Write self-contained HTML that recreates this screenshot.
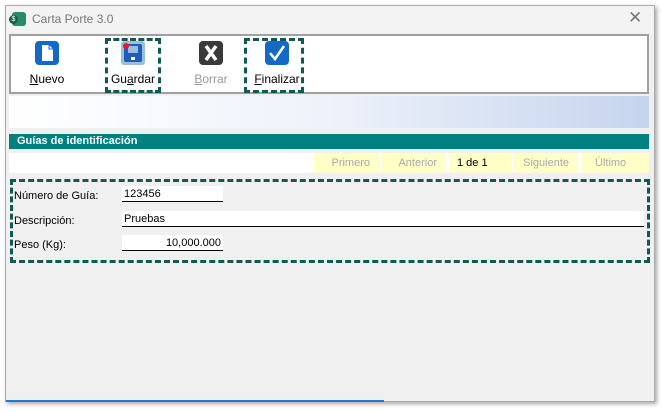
<!DOCTYPE html>
<html><head><meta charset="utf-8"><style>
*{margin:0;padding:0;box-sizing:border-box}
body{width:662px;height:412px;background:#fff;font-family:"Liberation Sans",sans-serif;position:relative;overflow:hidden}
.win{position:absolute;left:5px;top:5px;width:650px;height:397px;background:#f0f0f0;border:1px solid #aaa;box-shadow:2px 2px 4px rgba(0,0,0,.35)}
.title{position:absolute;left:0;top:0;width:648px;height:27px;background:#f3f3f3;font-size:12px;color:#777}
.abs{position:absolute}
.tb{position:absolute;left:3px;top:28px;width:640px;height:60px;background:#fff;border:2px solid #a0a0a0}
.btn{position:absolute;top:4px;text-align:center;font-size:12px;color:#000;width:60px}
.btn .lbl{position:absolute;top:32px;left:0;width:100%}
.dash{position:absolute;border:3px dashed #0f5a52}
.grad{position:absolute;left:3px;top:90px;width:640px;height:32px;background:linear-gradient(90deg,#fff 0%,#eef2fa 50%,#c5d4ee 100%)}
.hdr{position:absolute;left:3px;top:128px;width:640px;height:15px;background:#008080;color:#fff;font-weight:bold;font-size:11px;padding-left:8px;line-height:15px}
.nav{position:absolute;left:3px;top:147px;width:640px;height:20px;background:#fff}
.nv{position:absolute;top:0;height:20px;width:65px;background:#ffffc8;font-size:11px;line-height:20px;color:#aaa;text-align:right;padding-right:9px}
.lab{position:absolute;left:8px;font-size:11px;color:#000}
.fld{position:absolute;height:16px;background:#fff;border-bottom:1px solid #000;font-size:11px;line-height:16px;padding:0 2px}
</style></head><body>
<div class="win">
 <div class="title">
  <div class="abs" style="left:6px;top:6px;width:14px;height:14px;border-radius:3px;background:#2a8a6a"></div>
  <div class="abs" style="left:3px;top:9px;width:9px;height:9px;border-radius:50%;background:#1d5e4b;color:#fff;font-size:7px;line-height:9px;text-align:center">$</div>
  <div class="abs" style="left:26px;top:6px">Carta Porte 3.0</div>
  <div class="abs" style="left:622px;top:2px;font-size:17px;color:#777">✕</div>
 </div>
 <div class="tb">
  <div class="btn" style="left:6px">
   <svg width="26" height="26" viewBox="0 0 26 26"><rect x="1" y="1" width="24" height="24" rx="4" fill="#1469c7"/><path d="M8 5h7l4 4v12H8z" fill="#fff"/><path d="M15 5v4h4" fill="none" stroke="#1469c7" stroke-width="1"/></svg>
   <div class="lbl"><u>N</u>uevo</div></div>
  <div class="btn" style="left:92px">
   <svg width="26" height="26" viewBox="0 0 26 26"><rect x="1" y="1" width="24" height="24" rx="3" fill="#9bbde0"/><rect x="4" y="4" width="18" height="18" rx="2" fill="#1f5db8"/><rect x="8" y="6" width="10" height="7" fill="#9bbde0"/><rect x="11" y="17" width="4" height="3" fill="#fff"/><circle cx="6" cy="6" r="3" fill="#e02020"/></svg>
   <div class="lbl">Gu<u>a</u>rdar</div></div>
  <div class="btn" style="left:170px">
   <svg width="26" height="26" viewBox="0 0 26 26"><rect x="1" y="1" width="24" height="24" rx="4" fill="#3a3a3a"/><path d="M8 6l10 14M18 6L8 20" stroke="#fff" stroke-width="3.5"/></svg>
   <div class="lbl" style="color:#999"><u>B</u>orrar</div></div>
  <div class="btn" style="left:236px">
   <svg width="26" height="26" viewBox="0 0 26 26"><rect x="1" y="1" width="24" height="24" rx="4" fill="#1469c7"/><path d="M6 13l5 6 9-13" fill="none" stroke="#fff" stroke-width="2.5"/></svg>
   <div class="lbl"><u>F</u>inalizar</div></div>
 </div>
 <div class="dash" style="left:99px;top:32px;width:56px;height:55px"></div>
 <div class="dash" style="left:238px;top:32px;width:60px;height:55px"></div>
 <div class="grad"></div>
 <div class="hdr">Guías de identificación</div>
 <div class="nav">
  <div class="nv" style="left:305px">Primero</div>
  <div class="nv" style="left:372px">Anterior</div>
  <div class="nv" style="left:440px;width:62px;color:#000;text-align:left;padding-left:8px">1 de 1</div>
  <div class="nv" style="left:504px">Siguiente</div>
  <div class="nv" style="left:573px;width:67px;text-align:left;padding-left:13px">Último</div>
 </div>
 <div class="dash" style="left:4px;top:173px;width:640px;height:84px"></div>
 <div class="lab" style="top:184px">Número de Guía:</div>
 <div class="fld" style="left:116px;top:180px;width:101px">123456</div>
 <div class="lab" style="top:209px">Descripción:</div>
 <div class="fld" style="left:116px;top:205px;width:522px">Pruebas</div>
 <div class="lab" style="top:233px">Peso (Kg):</div>
 <div class="fld" style="left:116px;top:229px;width:101px;text-align:right">10,000.000</div>
</div>
<div class="abs" style="left:6px;top:400px;width:378px;height:2px;background:#1e7ad0"></div>
</body></html>
